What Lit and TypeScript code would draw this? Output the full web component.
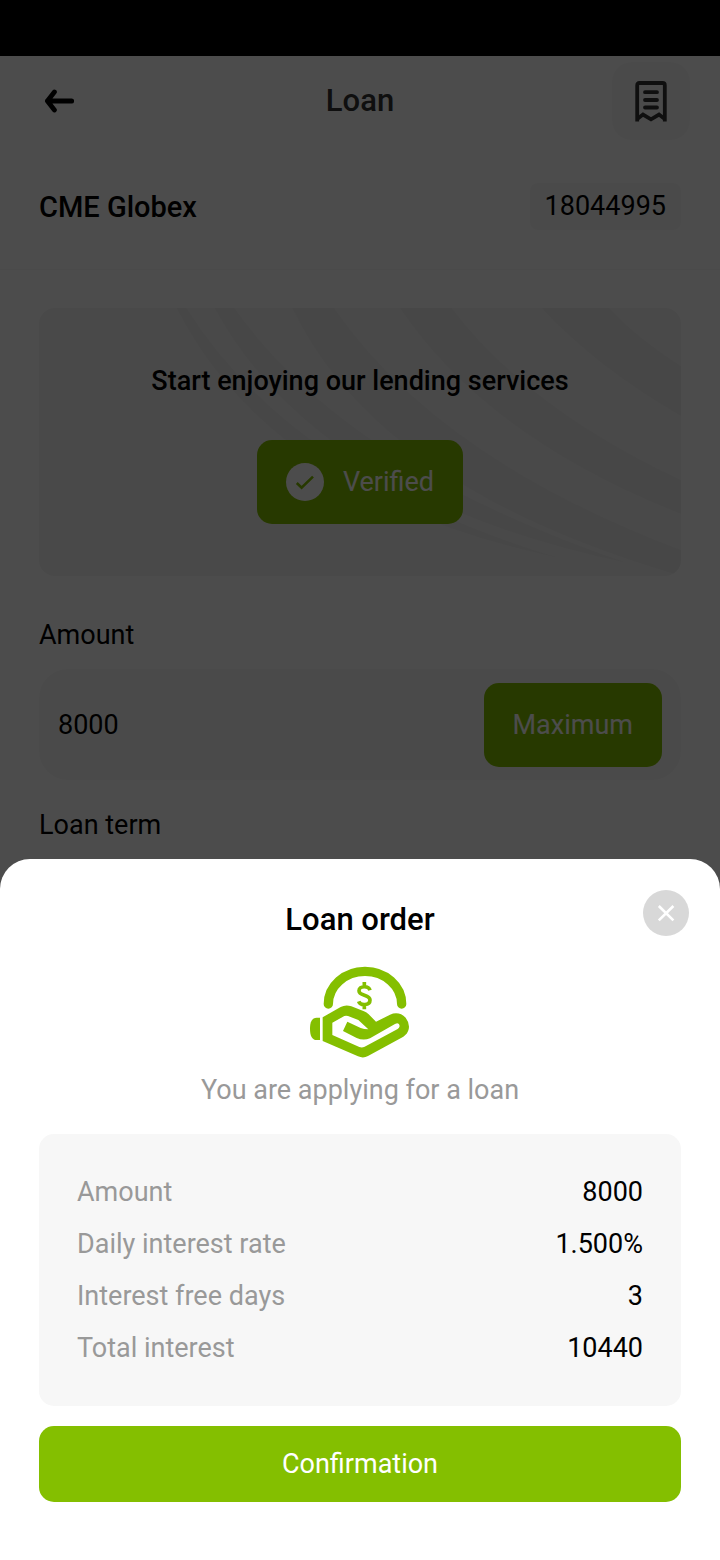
import { LitElement, html, css } from "lit";
import { customElement, property } from "lit/decorators.js";

interface OrderRow {
  label: string;
  value: string;
}

@customElement("loan-page")
class LoanPage extends LitElement {
  static styles = css`
    :host {
      display: block;
      font-size: 27px;
      line-height: 32px;
      color: #000;
    }
    * {
      box-sizing: border-box;
    }
    h1,
    h2,
    p {
      margin: 0;
      font-weight: 500;
    }
    button,
    input {
      font: inherit;
      border: 0;
      padding: 0;
      background: none;
    }
    svg {
      display: block;
      fill: none;
    }
    .status {
      height: 56px;
      background: #000;
    }
    .bar {
      display: grid;
      grid-template-columns: 1fr auto 1fr;
      align-items: center;
      height: 90px;
      padding: 0 30px;
    }
    .back {
      justify-self: start;
      padding: 14px;
    }
    .title {
      font-size: 31px;
      color: #333;
    }
    .records {
      justify-self: end;
      display: grid;
      place-items: center;
      width: 78px;
      height: 78px;
      border-radius: 20px;
      background: #f9f9f9;
    }
    .account {
      display: flex;
      align-items: center;
      justify-content: space-between;
      padding: 37px 39px 39px;
      border-bottom: 1px solid #f7f7f7;
    }
    .name {
      font-size: 29px;
    }
    .number {
      padding: 7px 15px 8px;
      border-radius: 8px;
      background: #f9f9f9;
    }
    .content {
      padding: 38px 39px;
    }
    .promo {
      position: relative;
      display: flex;
      flex-direction: column;
      align-items: center;
      gap: 43px;
      padding: 57px 20px 52px;
      border-radius: 16px;
      overflow: hidden;
      background: #f5f5f5;
    }
    .rays {
      position: absolute;
      inset: 0;
      width: 100%;
      height: 100%;
      fill: #efefef;
    }
    .lead,
    .verified {
      position: relative;
    }
    .green {
      display: flex;
      align-items: center;
      gap: 19px;
      height: 84px;
      padding: 0 29px;
      border-radius: 15px;
      background: #84bf00;
      color: #fff;
    }
    .label {
      display: block;
      margin-top: 43px;
    }
    .field {
      display: flex;
      align-items: center;
      margin-top: 18px;
      height: 111px;
      padding: 0 19px;
      border-radius: 29px;
      background: #f9f9f9;
    }
    .amount {
      flex: 1;
      min-width: 0;
      color: #000;
    }
    .term {
      margin-top: 29px;
      font-weight: 400;
    }
  `;

  render() {
    return html`
      <div class="status"></div>
      <header class="bar">
        <button class="back" aria-label="Back">
          <svg width="30" height="24" viewBox="0 0 30 24" stroke="#000" stroke-width="4.8" stroke-linecap="round" stroke-linejoin="round">
            <path d="M3.4 12H27.7M10.4 3L3.4 12L10.4 21" />
          </svg>
        </button>
        <h1 class="title">Loan</h1>
        <button class="records" aria-label="Loan records">
          <svg width="32" height="41" viewBox="0 0 32 41" stroke="#333" stroke-width="3.8">
            <path d="M2.2 40.5V4.2Q2.2 2 4.4 2H27.6Q29.8 2 29.8 4.2V40.5" />
            <path d="M2.2 38L8 33.6L16 38.4L24 33.6L29.8 38" />
            <path d="M10 11.2H22M10 19H22M10 26.5H22" stroke-linecap="round" />
          </svg>
        </button>
      </header>
      <section class="account">
        <h2 class="name">CME Globex</h2>
        <span class="number">18044995</span>
      </section>
      <main class="content">
        <section class="promo">
          <svg class="rays" viewBox="0 0 644 268" preserveAspectRatio="none" aria-hidden="true">
            <path d="M138 0H148Q255 170 522 250Q235 190 138 0Z" />
            <path d="M176 0H196Q310 160 590 255Q280 190 176 0Z" />
            <path d="M254 0H296Q400 150 644 242V268Q340 180 254 0Z" />
            <path d="M362 0H414Q490 100 644 172V206Q450 130 362 0Z" />
            <path d="M504 0H572Q600 30 644 58V108Q560 60 504 0Z" />
          </svg>
          <p class="lead">Start enjoying our lending services</p>
          <button class="verified green">
            <svg width="38" height="38" viewBox="0 0 38 38">
              <circle cx="19" cy="19" r="19" fill="#fff" />
              <path d="M10.8 20L15.6 24.6L27 13.6" stroke="#84bf00" stroke-width="2.6" />
            </svg>
            Verified
          </button>
        </section>
        <label class="label" for="amount">Amount</label>
        <div class="field">
          <input class="amount" id="amount" inputmode="numeric" .value=${"8000"} />
          <button class="green">Maximum</button>
        </div>
        <p class="term">Loan term</p>
      </main>
    `;
  }
}

@customElement("loan-order")
class LoanOrder extends LitElement {
  @property({ attribute: false }) rows: OrderRow[] = [];

  static styles = css`
    :host {
      display: block;
      font-size: 27px;
      line-height: 32px;
    }
    * {
      box-sizing: border-box;
    }
    .sheet {
      position: relative;
      display: flex;
      flex-direction: column;
      padding: 42px 39px 58px;
      border-radius: 30px 30px 0 0;
      background: #fff;
    }
    .title {
      margin: 0;
      font-size: 31px;
      line-height: 38px;
      font-weight: 500;
      text-align: center;
      color: #000;
    }
    .close {
      position: absolute;
      top: 31px;
      right: 31px;
      padding: 0;
      border: 0;
      border-radius: 50%;
      background: #d8d8d8;
    }
    svg {
      display: block;
    }
    .hand {
      align-self: center;
      margin-top: 27px;
    }
    .note {
      margin: 16px 0 28px;
      text-align: center;
      color: #999;
    }
    .rows {
      display: grid;
      gap: 20px;
      margin: 0;
      padding: 42px 38px;
      border-radius: 15px;
      background: #f7f7f7;
    }
    .row {
      display: flex;
      justify-content: space-between;
    }
    .key {
      color: #999;
    }
    .value {
      margin: 0;
      color: #000;
    }
    .confirm {
      margin-top: 20px;
      height: 76px;
      border: 0;
      border-radius: 15px;
      background: #84bf00;
      color: #fff;
      font: inherit;
    }
  `;

  render() {
    return html`
      <section class="sheet" role="dialog" aria-labelledby="order-title">
        <h2 class="title" id="order-title">Loan order</h2>
        <button class="close" aria-label="Close">
          <svg width="46" height="46" viewBox="0 0 46 46" stroke="#fff" stroke-width="2.6">
            <path d="M15.8 16L30.4 30.4M30.4 16L15.8 30.4" />
          </svg>
        </button>
        <svg class="hand" width="100" height="92" viewBox="60 48 300 276" fill="none" aria-hidden="true">
          <path d="M115 162A110 98 0 0 1 335 162" stroke="#84bf00" stroke-width="28" stroke-linecap="round" />
          <path d="M223 96V110M223 163V178M240 121C236 106 207 107 207 122C207 139 240 132 240 150C240 167 211 168 206 154" stroke="#84bf00" stroke-width="11" />
          <path d="M90 203H80C66 203 60 215 60 236S66 270 80 270H90Z" fill="#84bf00" />
          <path
            fill="#84bf00"
            fill-rule="evenodd"
            d="M98 202L152 171Q167 163 184 169L222 184Q230 187 236 193L258 215L300 194Q327 183 347 203Q360 220 356 238Q353 252 340 260L234 318Q220 326 204 319L98 273ZM127 218L163 198Q168 196 174 198L205 210L235 238Q222 238 212 234L172 215L159 243L200 264Q220 273 240 265L315 222Q328 216 329 228Q328 234 323 237L224 290Q216 294 208 291L127 255Z"
          />
        </svg>
        <p class="note">You are applying for a loan</p>
        <dl class="rows">
          ${this.rows.map(
            (row) => html`<div class="row">
              <dt class="key">${row.label}</dt>
              <dd class="value">${row.value}</dd>
            </div>`
          )}
        </dl>
        <button class="confirm">Confirmation</button>
      </section>
    `;
  }
}

@customElement("app-root")
class AppRoot extends LitElement {
  static styles = css`
    :host {
      display: block;
      min-height: 100vh;
      background: #fff;
      font-family: Roboto, "Noto Sans", sans-serif;
    }
    .mask {
      position: fixed;
      inset: 0;
      background: rgba(0, 0, 0, 0.7);
    }
    .order {
      position: fixed;
      left: 0;
      right: 0;
      bottom: 0;
    }
  `;

  private rows: OrderRow[] = [
    { label: "Amount", value: "8000" },
    { label: "Daily interest rate", value: "1.500%" },
    { label: "Interest free days", value: "3" },
    { label: "Total interest", value: "10440" },
  ];

  render() {
    return html`
      <loan-page></loan-page>
      <div class="mask"></div>
      <loan-order class="order" .rows=${this.rows}></loan-order>
    `;
  }
}
